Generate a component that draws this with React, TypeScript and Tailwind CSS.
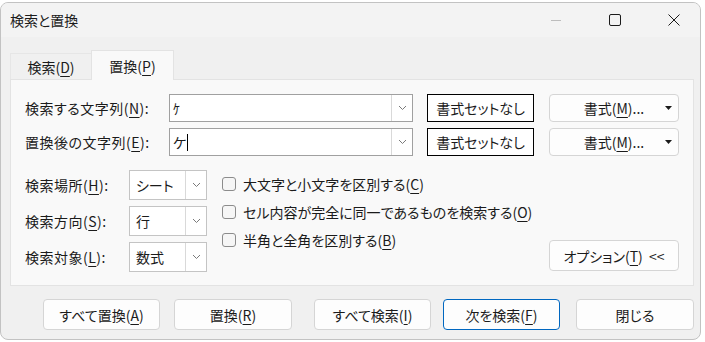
import React from "react";

const U = ({ children }: { children: React.ReactNode }) => (
  <span className="underline underline-offset-[3px] decoration-1">{children}</span>
);

const Chevron = () => (
  <svg width="9" height="6" viewBox="0 0 9 6" className="text-[#7a7a7a]">
    <path d="M1 1 L4.5 4.5 L8 1" fill="none" stroke="currentColor" strokeWidth="1" />
  </svg>
);

const Combo = ({ value, caret = false }: { value: string; caret?: boolean }) => (
  <div className="w-[244px] h-[28px] bg-white border border-[#a0a0a0] flex items-center">
    <div className="flex-1 pl-[3px] flex items-center text-[14px]">
      {value}
      {caret && <span className="inline-block w-px h-[17px] bg-black ml-[1px]" />}
    </div>
    <div className="w-[21px] h-[26px] border-l border-[#d9d9d9] flex items-center justify-center">
      <Chevron />
    </div>
  </div>
);

const Select = ({ value }: { value: string }) => (
  <div className="w-[78px] h-[30px] bg-white border border-[#c4c4c4] flex items-center">
    <div className="flex-1 pl-[6px] text-[14px]">{value}</div>
    <div className="w-[21px] h-[28px] border-l border-[#d9d9d9] flex items-center justify-center">
      <Chevron />
    </div>
  </div>
);

const Check = ({ children }: { children: React.ReactNode }) => (
  <div className="h-[28px] flex items-center">
    <div className="w-[14px] h-[14px] rounded-[3px] border border-[#8c8c8c] bg-[#f6f6f6]" />
    <span className="ml-[7px] text-[14px]">{children}</span>
  </div>
);

const Btn = ({
  children,
  className = "",
}: {
  children: React.ReactNode;
  className?: string;
}) => (
  <div
    className={`h-[31px] rounded-[4px] bg-[#fdfdfd] border flex items-center justify-center text-[14px] ${className}`}
  >
    {children}
  </div>
);

const FormatButtons = () => (
  <>
    <div className="ml-[14px] w-[107px] h-[28px] bg-white border border-black flex items-center justify-center text-[14px]">
      書式セットなし
    </div>
    <div className="ml-[15px] w-[130px] h-[28px] rounded-[4px] bg-[#fdfdfd] border border-[#d5d5d5] flex items-center justify-center text-[14px] relative">
      書式(<U>M</U>)...
      <svg width="7" height="4" viewBox="0 0 7 4" className="absolute right-[6px] top-[11px]">
        <path d="M0 0 H7 L3.5 4 Z" fill="#1b1b1b" />
      </svg>
    </div>
  </>
);

export default function App() {
  return (
    <div className="w-[705px] h-[342px] bg-white overflow-hidden font-['Noto_Sans_CJK_JP',sans-serif] [font-feature-settings:'palt'] text-[#1b1b1b] leading-none">
      <div className="mt-[2px] w-[701px] h-[338px] rounded-lg border border-[#c2c2c2] bg-[#f0f0f0] flex flex-col overflow-hidden">
        {/* title bar */}
        <div className="h-[34px] flex items-center pl-[9px] bg-[#f3f3f3]">
          <span className="text-[14px]">検索と置換</span>
          <div className="flex-1" />
          <svg width="10" height="10" viewBox="0 0 10 10">
            <path d="M0 5.5 H10" stroke="#bdbdbd" strokeWidth="1" />
          </svg>
          <svg width="12" height="12" viewBox="0 0 12 12" className="ml-[48px]">
            <rect x="0.5" y="0.5" width="11" height="11" rx="1.5" fill="none" stroke="#1b1b1b" strokeWidth="1" />
          </svg>
          <svg width="12" height="12" viewBox="0 0 12 12" className="ml-[47px] mr-[20px]">
            <path d="M0.5 0.5 L11.5 11.5 M11.5 0.5 L0.5 11.5" stroke="#1b1b1b" strokeWidth="1" />
          </svg>
        </div>

        {/* tabs */}
        <div className="mt-[13px] pl-[9px] flex items-end">
          <div className="w-[81px] h-[26px] flex items-center justify-center text-[14px] border-t border-l border-[#e6e6e6]">
            検索(<U>D</U>)
          </div>
          <div className="w-[83px] h-[30px] -mb-px relative z-10 bg-[#f9f9f9] border border-b-0 border-[#e3e3e3] flex items-center justify-center text-[14px]">
            置換(<U>P</U>)
          </div>
        </div>

        {/* panel */}
        <div className="ml-[9px] w-[684px] h-[207px] bg-[#f9f9f9] border border-[#e3e3e3] pl-[14px] pt-[14px]">
          <div className="flex items-center h-[28px]">
            <div className="w-[144px] text-[14px] tracking-[0.5px]">
              検索する文字列(<U>N</U>):
            </div>
            <Combo value="ｹ" />
            <FormatButtons />
          </div>
          <div className="flex items-center h-[28px] mt-[6px]">
            <div className="w-[144px] text-[14px] tracking-[0.5px]">
              置換後の文字列(<U>E</U>):
            </div>
            <Combo value="ケ" caret />
            <FormatButtons />
          </div>

          <div className="flex mt-[14px]">
            <div className="flex flex-col gap-[6px]">
              <div className="flex items-center">
                <div className="w-[104px] text-[14px] tracking-[0.5px]">
                  検索場所(<U>H</U>):
                </div>
                <Select value="シート" />
              </div>
              <div className="flex items-center">
                <div className="w-[104px] text-[14px] tracking-[0.5px]">
                  検索方向(<U>S</U>):
                </div>
                <Select value="行" />
              </div>
              <div className="flex items-center">
                <div className="w-[104px] text-[14px] tracking-[0.5px]">
                  検索対象(<U>L</U>):
                </div>
                <Select value="数式" />
              </div>
            </div>
            <div className="ml-[15px] w-[327px] flex flex-col">
              <Check>
                大文字と小文字を区別する(<U>C</U>)
              </Check>
              <Check>
                セル内容が完全に同一であるものを検索する(<U>O</U>)
              </Check>
              <Check>
                半角と全角を区別する(<U>B</U>)
              </Check>
            </div>
            <div className="self-end mb-[1px]">
              <Btn className="w-[130px] border-[#d5d5d5]">
                オプション(<U>T</U>)&nbsp;&nbsp;&lt;&lt;
              </Btn>
            </div>
          </div>
        </div>

        {/* bottom buttons */}
        <div className="flex mt-[13px] pl-[42px]">
          <Btn className="w-[117px] border-[#d5d5d5]">
            すべて置換(<U>A</U>)
          </Btn>
          <Btn className="ml-[14px] w-[118px] border-[#d5d5d5]">
            置換(<U>R</U>)
          </Btn>
          <Btn className="ml-[22px] w-[117px] border-[#d5d5d5]">
            すべて検索(<U>I</U>)
          </Btn>
          <Btn className="ml-[12px] w-[117px] border-[#0067c0]">
            次を検索(<U>F</U>)
          </Btn>
          <Btn className="ml-[16px] w-[118px] border-[#d5d5d5]">閉じる</Btn>
        </div>
      </div>
    </div>
  );
}
